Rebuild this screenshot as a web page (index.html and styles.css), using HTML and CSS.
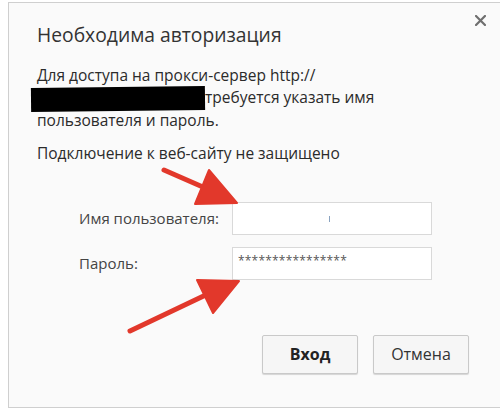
FILE: index.html
```html
<!DOCTYPE html>
<html lang="ru">
<head>
  <meta charset="UTF-8">
  <title>Необходима авторизация</title>
  <link rel="stylesheet" href="styles.css">
</head>
<body>
  <div class="dialog">
    <!-- Header -->
    <div class="header">
      <h1 class="title">Необходима авторизация</h1>
      <button class="close" aria-label="Закрыть">
        <svg width="11" height="11" viewBox="0 0 11 11">
          <path d="M1 1 L10 10 M10 1 L1 10" stroke="#6f6f6f" stroke-width="2.2" stroke-linecap="square"/>
        </svg>
      </button>
    </div>

    <p class="message">
      Для доступа на прокси-сервер http://<br>
      <span class="redacted"></span>требуется указать имя<br>
      пользователя и пароль.
    </p>
    <p class="message warning">Подключение к веб-сайту не защищено</p>

    <!-- Login form -->
    <div class="form">
      <label class="label">Имя пользователя:</label>
      <div class="field"><span class="caret"></span></div>
      <label class="label">Пароль:</label>
      <div class="field password">****************</div>
    </div>

    <div class="actions">
      <button class="btn primary">Вход</button>
      <button class="btn">Отмена</button>
    </div>

    <!-- Red arrows drawn on top of the screenshot -->
    <svg class="arrows" width="500" height="410" viewBox="0 0 500 410">
      <g fill="#e2382b" stroke="#e2382b" stroke-linecap="round" stroke-linejoin="round">
        <line x1="164" y1="170" x2="212" y2="191" stroke-width="5"/>
        <polygon points="237,203 209,170 195,204" stroke-width="2"/>
        <line x1="130" y1="331" x2="212" y2="292" stroke-width="5"/>
        <polygon points="239,281 197,280 213,313" stroke-width="2"/>
      </g>
    </svg>
  </div>
</body>
</html>
```

FILE: styles.css
```css
html, body {
  margin: 0;
  padding: 0;
  overflow: hidden;
}
body {
  background-color: #ffffff;
  font-family: "Open Sans", "Noto Sans", sans-serif;
  color: #333;
  width: 500px;
  height: 410px;
}
.dialog {
  position: relative;
  margin: 2px 0 0 8px;
  height: 406px;
  background-color: #fafafa;
  border: 1px solid #cfcfcf;
  border-right: none;
  box-sizing: border-box;
  padding: 0 0 0 28px;
}
.header {
  display: flex;
  justify-content: space-between;
  align-items: flex-start;
}
.title {
  margin: 18px 0 0 0;
  font-size: 19.3px;
  font-weight: normal;
  color: #333;
  line-height: 28px;
}
.close {
  margin: 12px 14px 0 0;
  padding: 0;
  border: none;
  background: transparent;
  width: 11px;
  height: 11px;
}
.close svg {
  display: block;
}
.message {
  margin: 15px 0 0 0;
  font-size: 15.5px;
  line-height: 22px;
  color: #2b2b2b;
}
.warning {
  margin-top: 11px;
}
.redacted {
  display: inline-block;
  width: 174px;
  height: 24px;
  margin: -2px 0 -2px -6px;
  background-color: #000;
  vertical-align: middle;
  transform: rotate(-0.6deg);
}
.form {
  display: grid;
  grid-template-columns: 141px 200px;
  column-gap: 12px;
  row-gap: 12px;
  margin: 38px 0 0 42px;
  align-items: center;
}
.label {
  font-size: 15px;
  color: #444;
  text-align: left;
  white-space: nowrap;
}
.field {
  position: relative;
  height: 33px;
  box-sizing: border-box;
  border: 1px solid #d9d9d9;
  background-color: #fff;
  font-size: 12px;
  line-height: 26px;
  padding: 0 5px;
  color: #555;
  letter-spacing: 0.2px;
}
.caret {
  position: absolute;
  left: 96px;
  top: 13px;
  width: 1px;
  height: 6px;
  background-color: #8aa3c0;
}
.actions {
  display: flex;
  justify-content: flex-end;
  gap: 15px;
  margin: 55px 31px 0 0;
}
.btn {
  width: 96px;
  height: 39px;
  font-family: "Open Sans", "Noto Sans", sans-serif;
  font-size: 16px;
  color: #333;
  background-color: #f6f6f6;
  border: 1px solid #c9c9c9;
  border-radius: 2px;
  box-shadow: 0 1px 1px rgba(0, 0, 0, 0.15);
}
.primary {
  font-weight: bold;
  color: #222;
}
.arrows {
  position: absolute;
  left: -9px;
  top: -3px;
  pointer-events: none;
}
```
